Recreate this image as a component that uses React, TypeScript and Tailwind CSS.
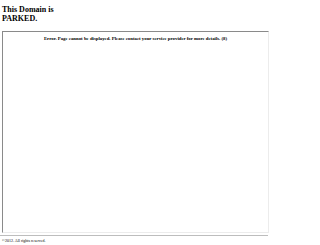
export default function App() {
  return (
    <div className="w-[320px] h-[245px] bg-white overflow-hidden px-[2px] font-['Liberation_Serif',serif] text-black">
      <h1 className="w-[60px] pt-[5px] text-[8px] leading-[9px] font-bold">
        This Domain is PARKED.
      </h1>
      <div className="mt-[8px] w-[267px] h-[202px] border-t-[1px] border-l-[1px] border-r-[1px] border-b-[1px] border-t-[#8a8a8a] border-l-[#8a8a8a] border-r-[#ececec] border-b-[#ececec]">
        <p className="pt-[4px] text-center text-[4.8px] leading-[5px] font-bold">
          Error. Page cannot be displayed. Please contact your service provider for more details. (8)
        </p>
      </div>
      <hr className="mt-[2px] -ml-[2px] w-[268px] border-t-[1px] border-[#bdbdbd]" />
      <p className="mt-[2px] text-[4px] leading-[5px]">©2012. All rights reserved.</p>
    </div>
  );
}
